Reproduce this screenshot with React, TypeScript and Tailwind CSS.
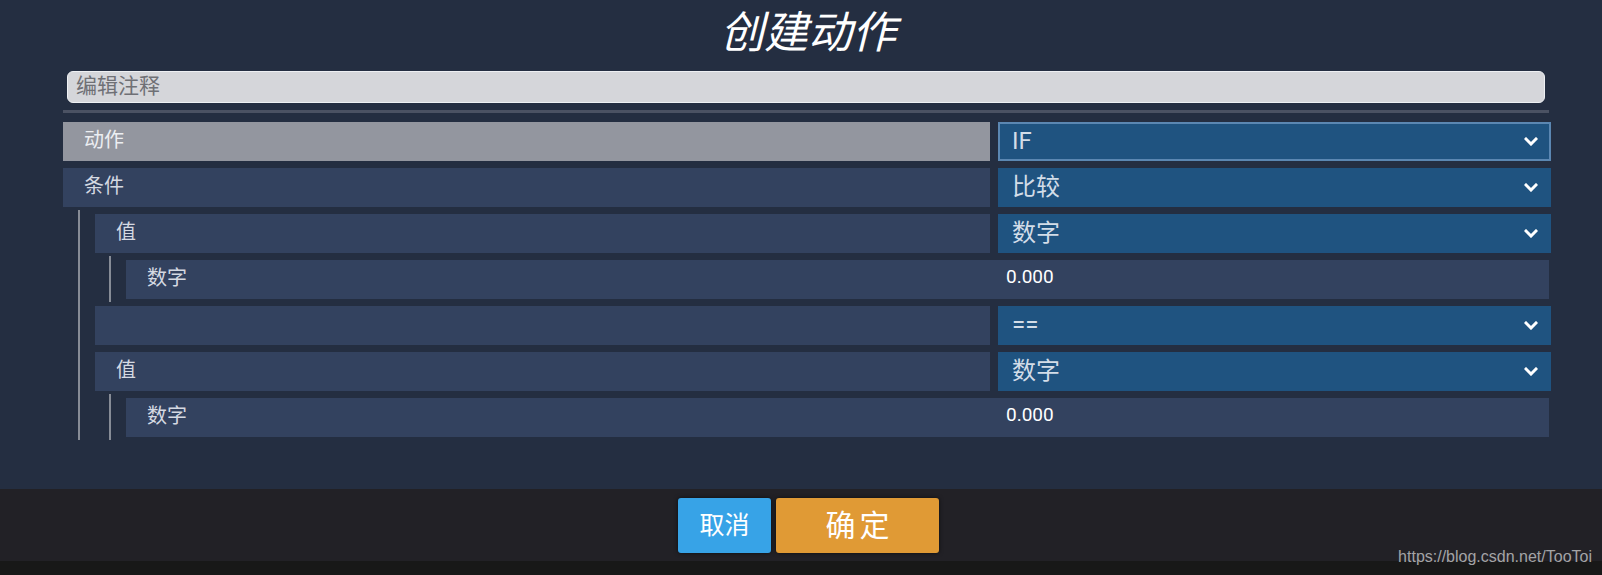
import type { ReactNode } from "react"

const FONT = "font-['Roboto','Noto_Sans_CJK_SC',sans-serif]"

function Chevron() {
  return (
    <svg width="14" height="9" viewBox="0 0 14 9" fill="none" className="shrink-0">
      <path d="M2 2 L7 7 L12 2" stroke="#ffffff" strokeWidth="3" strokeLinecap="square" />
    </svg>
  )
}

function Dropdown({ value, focused = false }: { value: string; focused?: boolean }) {
  return (
    <div
      className={
        focused
          ? "flex items-center justify-between border-2 border-[#5b87b2] bg-[#1f5380] pl-[12px] pr-[11px] text-[24px] text-[#d3dde8]"
          : "flex items-center justify-between bg-[#1f5380] pl-[14px] pr-[13px] text-[24px] text-[#d3dde8]"
      }
    >
      <span className="leading-none">{value}</span>
      <Chevron />
    </div>
  )
}

function FieldRow({ label, value, active = false }: { label: string; value: string; active?: boolean }) {
  return (
    <div className="grid h-[39px] grid-cols-[1fr_553px] gap-x-[8px]">
      <div
        className={
          active
            ? "flex items-center bg-[#93969f] pb-[3px] pl-[21px] text-[20px] leading-none text-[#eceef2]"
            : "flex items-center bg-[#33425f] pb-[3px] pl-[21px] text-[20px] leading-none text-[#d5d9e2]"
        }
      >
        {label}
      </div>
      <Dropdown value={value} focused={active} />
    </div>
  )
}

function ValueRow({ label, value }: { label: string; value: string }) {
  return (
    <div className="mr-[2px] grid h-[39px] grid-cols-[1fr_551px] gap-x-[8px] bg-[#33425f]">
      <div className="flex items-center pb-[3px] pl-[21px] text-[20px] leading-none text-[#d5d9e2]">{label}</div>
      <div className="flex items-center pb-[6px] pl-[8px] text-[19px] leading-none text-white">{value}</div>
    </div>
  )
}

// vertical guide line that runs down the side of nested rows
function Group({ children, inner = false }: { children: ReactNode; inner?: boolean }) {
  return (
    <div
      className={
        (inner ? "ml-[14px] " : "ml-[15px] ") +
        "-mb-[3px] -mt-[4px] flex flex-col gap-[7px] border-l-2 border-[#878c96] pb-[3px] pl-[15px] pt-[4px]"
      }
    >
      {children}
    </div>
  )
}

export default function App() {
  return (
    <div className={`relative flex h-[575px] w-[1602px] flex-col overflow-hidden bg-[#242e41] ${FONT}`}>
      <div className="h-[489px] pl-[63px] pr-[51px]">
        <h1 className="pl-[2px] pt-[3px] text-center font-['Noto_Sans_CJK_SC',sans-serif] text-[44px] leading-[1.2] text-white">
          <span className="inline-block px-[8px] italic">创建动作</span>
        </h1>

        <div className="ml-[4px] mr-[6px] mt-[15px] flex h-[32px] items-center rounded-[6px] border border-[#eef0f3] bg-[#d5d6da] pl-[8px] text-[21px] leading-none text-[#6f7075]">
          编辑注释
        </div>

        <div className="mr-[2px] mt-[7px] h-[3px] bg-[#4b5263]" />

        <div className="mt-[9px] flex flex-col gap-[7px]">
          <FieldRow label="动作" value="IF" active />
          <FieldRow label="条件" value="比较" />
          <Group>
            <FieldRow label="值" value="数字" />
            <Group inner>
              <ValueRow label="数字" value="0.000" />
            </Group>
            <FieldRow label="" value="==" />
            <FieldRow label="值" value="数字" />
            <Group inner>
              <ValueRow label="数字" value="0.000" />
            </Group>
          </Group>
        </div>
      </div>

      <footer className="flex h-[72px] items-start justify-center gap-[5px] bg-[#222126] pl-[66px] pr-[51px] pt-[9px]">
        <button className="flex h-[55px] w-[93px] items-center justify-center rounded-[3px] bg-[#37a3e7] text-[25px] leading-none text-white shadow-[0_0_4px_rgba(0,0,0,0.6)]">
          取消
        </button>
        <button className="flex h-[55px] w-[163px] items-center justify-center rounded-[3px] bg-[#e09a35] pl-[4px] text-[30px] leading-none tracking-[4px] text-white shadow-[0_0_4px_rgba(0,0,0,0.6)]">
          确定
        </button>
      </footer>
      <div className="h-[14px] bg-[#181818]" />

      <span className="absolute bottom-[10px] right-[10px] font-['Liberation_Sans',sans-serif] text-[16px] leading-none text-[#a4a4a6]">
        https://blog.csdn.net/TooToi
      </span>
    </div>
  )
}
